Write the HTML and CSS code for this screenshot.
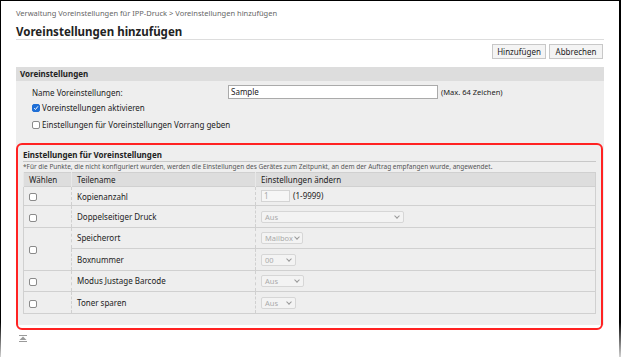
FILE: index.html
```html
<!DOCTYPE html>
<html lang="de">
<head>
    <meta charset="UTF-8">
    <title>Voreinstellungen hinzufügen</title>
    <link rel="stylesheet" href="styles.css">
</head>
<body>
<div class="frame">
    <div class="page">

        <div class="breadcrumb">Verwaltung Voreinstellungen für IPP-Druck &gt; Voreinstellungen hinzufügen</div>
        <h1 class="title">Voreinstellungen hinzufügen</h1>

        <div class="actions">
            <button class="btn">Hinzufügen</button>
            <button class="btn">Abbrechen</button>
        </div>

        <section class="panel">
            <h2 class="panel-head">Voreinstellungen</h2>
            <div class="panel-body">

                <div class="form-rows">
                    <div class="field-row">
                        <span class="field-label">Name Voreinstellungen:</span>
                        <span class="text-input wide">Sample</span>
                        <span class="hint">(Max. 64 Zeichen)</span>
                    </div>
                    <div class="check-row">
                        <span class="box checked">
                            <svg viewBox="0 0 8 8" width="8" height="8"><path d="M1.5 4.2 L3.3 6 L6.6 1.8" fill="none" stroke="#fff" stroke-width="1.3"/></svg>
                        </span>
                        Voreinstellungen aktivieren
                    </div>
                    <div class="check-row">
                        <span class="box"></span>
                        Einstellungen für Voreinstellungen Vorrang geben
                    </div>
                </div>

                <div class="preset-settings">
                    <div class="highlight"></div>
                    <h3 class="sub-head">Einstellungen für Voreinstellungen</h3>
                    <p class="note">*Für die Punkte, die nicht konfiguriert wurden, werden die Einstellungen des Gerätes zum Zeitpunkt, an dem der Auftrag empfangen wurde, angewendet.</p>

                    <table class="settings">
                        <thead>
                            <tr>
                                <th class="col-pick">Wählen</th>
                                <th class="col-name">Teilename</th>
                                <th>Einstellungen ändern</th>
                            </tr>
                        </thead>
                        <tbody>
                            <tr class="first">
                                <td><span class="box"></span></td>
                                <td>Kopienanzahl</td>
                                <td><span class="text-input small off">1</span> <span class="range">(1-9999)</span></td>
                            </tr>
                            <tr>
                                <td><span class="box"></span></td>
                                <td>Doppelseitiger Druck</td>
                                <td><span class="select s-wide">Aus<i class="chev"></i></span></td>
                            </tr>
                            <tr class="split">
                                <td rowspan="2"><span class="box"></span></td>
                                <td>Speicherort</td>
                                <td><span class="select s-mail">Mailbox<i class="chev"></i></span></td>
                            </tr>
                            <tr>
                                <td>Boxnummer</td>
                                <td><span class="select s-box">00<i class="chev"></i></span></td>
                            </tr>
                            <tr>
                                <td><span class="box"></span></td>
                                <td>Modus Justage Barcode</td>
                                <td><span class="select s-mid">Aus<i class="chev"></i></span></td>
                            </tr>
                            <tr>
                                <td><span class="box"></span></td>
                                <td>Toner sparen</td>
                                <td><span class="select s-box">Aus<i class="chev"></i></span></td>
                            </tr>
                        </tbody>
                    </table>
                </div>

            </div>
        </section>

        <div class="to-top">
            <svg viewBox="0 0 8 7" width="8" height="7">
                <rect x="0" y="0" width="8" height="1" fill="#9a9a9a"/>
                <path d="M4 1.5 L7.5 5 L0.5 5 Z" fill="#9a9a9a"/>
                <rect x="0" y="6" width="8" height="1" fill="#9a9a9a"/>
            </svg>
        </div>

    </div>
</div>
</body>
</html>
```

FILE: styles.css
```css
:root {
    --text: #222;
    --muted: #666;
    --line: #d0d0d0;
    --panel: #eeeeee;
    --panel-head: #dddddd;
    --padding: 15px;
}

* {
    box-sizing: border-box;
    margin: 0;
    padding: 0;
}

body {
    font-family: "Noto Sans", "Open Sans", sans-serif;
    font-size: 8px;
    color: var(--text);
    background: #fff;
}

/* screenshot frame, fades out at the bottom */
.frame {
    width: 621px;
    height: 357px;
    border-style: solid;
    border-width: 1px 2px 0 1px;
    border-image: linear-gradient(#000 90%, #d8d8d8) 1;
    overflow: hidden;
}

.page {
    padding: 0 var(--padding);
}

.breadcrumb {
    color: var(--muted);
    font-size: 7.5px;
    line-height: 10px;
    padding-top: 7px;
}

.title {
    font-size: 11.5px;
    font-weight: bold;
    line-height: 14px;
    margin-top: 7px;
    border-bottom: 1px solid #ddd;
}

.actions {
    display: flex;
    justify-content: flex-end;
    gap: 3px;
    padding: 4px 1px 0 0;
}

.btn {
    font: inherit;
    color: var(--text);
    width: 54px;
    height: 15px;
    background: #f4f4f4;
    border: 1px solid #c8c8c8;
}

.panel {
    margin-top: 8px;
    background: var(--panel);
}

.panel-head {
    font-size: 8px;
    font-weight: bold;
    line-height: 14px;
    padding-left: 4px;
    background: var(--panel-head);
}

.panel-body {
    padding: 4px 8px 11px 7px;
}

.form-rows {
    padding-left: 9px;
}

.field-row {
    display: flex;
    align-items: center;
    height: 14px;
}

.field-label {
    width: 196px;
}

.text-input {
    display: inline-block;
    height: 14px;
    line-height: 12px;
    padding-left: 2px;
    background: #fff;
    border: 1px solid #aaa;
}

.text-input.wide {
    width: 210px;
}

.hint {
    margin-left: 3px;
    font-size: 7.5px;
}

.check-row {
    display: flex;
    align-items: center;
    gap: 2px;
    height: 17px;
}

.check-row:first-of-type {
    margin-top: 4px;
}

.box {
    display: inline-flex;
    align-items: center;
    justify-content: center;
    width: 8px;
    height: 8px;
    background: #fff;
    border: 1px solid #8a8a8a;
    border-radius: 2px;
}

.box.checked {
    background: #1f6fd6;
    border-color: #1f6fd6;
}

/* inner block with the red annotation round it */
.preset-settings {
    position: relative;
    margin-top: 15px;
}

.highlight {
    position: absolute;
    top: -5px;
    left: -7px;
    right: -7px;
    bottom: -16px;
    border: 2px solid #f22;
    border-radius: 6px;
    pointer-events: none;
}

.sub-head {
    font-size: 8px;
    font-weight: bold;
    line-height: 11px;
    padding: 1px 0;
    border-bottom: 1px solid #c8c8c8;
}

.note {
    font-size: 6.5px;
    color: #555;
    line-height: 10px;
}

.settings {
    width: 100%;
    border-collapse: collapse;
    border: 1px solid var(--line);
}

.settings th {
    font-weight: normal;
    text-align: left;
    height: 14px;
    padding-left: 5px;
    background: var(--panel-head);
    border-left: 1px solid #e8e8e8;
}

.settings .col-pick {
    width: 48px;
}

.settings .col-name {
    width: 184px;
}

.settings td {
    height: 21.5px;
    padding-left: 5px;
    border-top: 1px solid var(--line);
    border-left: 1px dashed var(--line);
}

.settings tr.first td {
    height: 19px;
}

.settings tr.split td {
    border-bottom: 1px dashed var(--line);
}

.settings td .box {
    vertical-align: middle;
}

.text-input.small {
    width: 29px;
    height: 12px;
    line-height: 10px;
    vertical-align: middle;
}

.off {
    color: #aaa;
    background: #f6f6f6;
    border-color: #d4d4d4;
}

.range {
    margin-left: 1px;
}

.select {
    display: inline-flex;
    align-items: center;
    justify-content: space-between;
    gap: 2px;
    height: 12px;
    padding: 0 4px 0 3px;
    font-size: 7.5px;
    color: #aaa;
    background: #f3f3f3;
    border: 1px solid #d6d6d6;
    border-radius: 2px;
    vertical-align: middle;
}

.s-wide { width: 143px; }
.s-mail { width: 42px; padding-right: 3px; }
.s-box  { width: 35px; }
.s-mid  { width: 43px; }

.chev {
    flex: none;
    width: 4px;
    height: 4px;
    border-right: 1px solid #999;
    border-bottom: 1px solid #999;
    transform: rotate(45deg);
    margin-top: -2px;
}

.to-top {
    padding: 10px 0 0 3px;
    line-height: 0;
}
```
